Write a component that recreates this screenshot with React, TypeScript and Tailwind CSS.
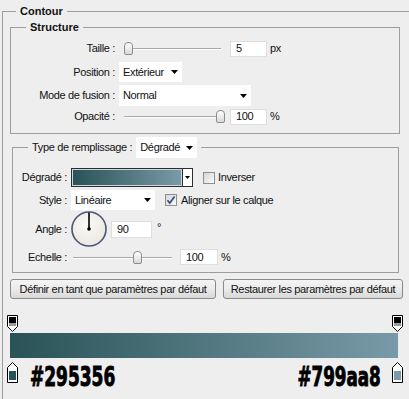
import React from 'react';

const GRAD = 'bg-[linear-gradient(to_right,#295356,#799aa8)]';

function Arrow() {
  return (
    <svg width="7" height="4" viewBox="0 0 7 4" className="shrink-0">
      <path d="M0 0h7L3.5 4z" fill="#000" />
    </svg>);
}

function Dropdown({ value, width, height }: {value: string;width: string;height: string;}) {
  return (
    <div className={`${width} ${height} bg-white flex items-center justify-between pl-[4px] pr-[4px] ml-[4px]`}>
      <span>{value}</span>
      <Arrow />
    </div>);
}

function Slider({ thumb, width, track }: {thumb: number;width: string;track: string;}) {
  return (
    <div className={`relative h-[17px] ${width}`}>
      <div className={`absolute top-[8px] h-[2px] border-t border-[#a9a9a9] bg-white ${track}`} />
      <div
        className="absolute top-[2px] w-[9px] h-[13px] rounded-t-[4px] rounded-b-[2px] border border-[#8c8c8c] bg-gradient-to-b from-white to-[#d9d9d9]"
        style={{ left: thumb }} />
    </div>);
}

function Field({ value, width, className = '' }: {value: string;width: string;className?: string;}) {
  return (
    <div className={`${width} h-[16px] bg-white border border-[#dedede] flex items-center pl-[5px] ${className}`}>
      {value}
    </div>);
}

function Checkbox({ checked }: {checked?: boolean;}) {
  return (
    <div className="w-[12px] h-[12px] border border-[#8e8f8f] bg-gradient-to-br from-[#d6d6d6] to-[#fafafa] flex items-center justify-center shrink-0">
      {checked &&
      <svg width="10" height="10" viewBox="0 0 10 10">
          <path d="M1.5 5.2 L3.8 8 L8.6 1.5" fill="none" stroke="#3c5086" strokeWidth="1.8" />
        </svg>
      }
    </div>);
}

function Dial() {
  return (
    <svg width="36" height="36" viewBox="0 0 36 36" className="ml-[4px] shrink-0">
      <defs>
        <radialGradient id="dialFill" cx="45%" cy="40%" r="60%">
          <stop offset="0%" stopColor="#fbfaf6" />
          <stop offset="100%" stopColor="#ebe8e0" />
        </radialGradient>
      </defs>
      <circle cx="18" cy="18" r="17" fill="url(#dialFill)" stroke="#4d5676" strokeWidth="1.6" />
      <line x1="18" y1="18" x2="18" y2="1.5" stroke="#000" strokeWidth="1.6" />
      <circle cx="18" cy="18" r="1.8" fill="#000" />
    </svg>);
}

function TopStop() {
  return (
    <svg width="11" height="17" viewBox="0 0 11 17">
      <path d="M0.5 0.5h10v11l-5 5l-5-5z" fill="#fff" stroke="#000" />
      <rect x="2" y="2" width="7" height="6" fill="#000" />
      <rect x="2" y="8" width="7" height="3" fill="#9a9a9a" />
    </svg>);
}

function BottomStop({ color }: {color: string;}) {
  return (
    <svg width="11" height="21" viewBox="0 0 11 21">
      <path d="M5.5 0.5l5 5v15h-10v-15z" fill="#fff" stroke="#000" />
      <rect x="2" y="9" width="7" height="9" fill={color} />
    </svg>);
}

function Button({ label, width, className = '' }: {label: string;width: string;className?: string;}) {
  return (
    <div className={`${width} h-[20px] rounded-[3px] border border-[#8a8a8a] bg-gradient-to-b from-[#f4f4f4] via-[#ebebeb] to-[#d8d8d8] flex items-center justify-center ${className}`}>
      {label}
    </div>);
}

export default function App() {
  return (
    <div className="w-[409px] h-[399px] overflow-hidden bg-[#eeeeee] text-[11px] tracking-[-0.35px] text-[#111] font-['Liberation_Sans',Arial,sans-serif] pl-[2px]">
      <fieldset className="mt-[4px] w-[420px] h-[420px] border border-[#9d9d9d]">
        <legend className="ml-[13px] px-[4px] leading-[14px] font-bold tracking-normal">Contour</legend>

        {/* Structure */}
        <fieldset className="mt-[2px] ml-[7px] w-[390px] border border-[#9d9d9d] pt-[6px] pb-[8px]">
          <legend className="ml-[15px] px-[4px] leading-[14px] font-bold tracking-normal">Structure</legend>

          <div className="flex items-center h-[17px]">
            <span className="w-[104px] text-right">Taille :</span>
            <div className="ml-[6px]">
              <Slider thumb={3} width="w-[105px]" track="left-[3px] right-[5px]" />
            </div>
            <Field value="5" width="w-[37px]" className="ml-[4px]" />
            <span className="ml-[3px]">px</span>
          </div>

          <div className="flex items-center h-[20px] mt-[5px]">
            <span className="w-[104px] text-right">Position :</span>
            <Dropdown value="Extérieur" width="w-[63px]" height="h-[20px]" />
          </div>

          <div className="flex items-center h-[21px] mt-[3px]">
            <span className="w-[104px] text-right">Mode de fusion :</span>
            <Dropdown value="Normal" width="w-[132px]" height="h-[21px]" />
          </div>

          <div className="flex items-center h-[17px] mt-[2px]">
            <span className="w-[104px] text-right">Opacité :</span>
            <div className="ml-[6px]">
              <Slider thumb={95} width="w-[105px]" track="left-[3px] right-[5px]" />
            </div>
            <Field value="100" width="w-[37px]" className="ml-[4px]" />
            <span className="ml-[3px]">%</span>
          </div>
        </fieldset>

        {/* Remplissage */}
        <fieldset className="mt-[3px] ml-[9px] w-[387px] border border-[#9d9d9d] pb-[7px]">
          <legend className="ml-[15px] px-[4px]">
            <div className="flex items-center h-[21px]">
              <span>Type de remplissage :</span>
              <Dropdown value="Dégradé" width="w-[61px]" height="h-[21px]" />
            </div>
          </legend>

          <div className="flex items-center h-[19px] mt-[10px]">
            <span className="w-[54px] text-right">Dégradé :</span>
            <div className="ml-[4px] w-[122px] h-[19px] border border-[#2e2e2e] flex">
              <div className={`flex-1 border border-[#cfd6d8] ${GRAD}`} />
              <div className="w-[10px] bg-white border-l border-[#2e2e2e] flex items-center justify-center">
                <svg width="5" height="3" viewBox="0 0 5 3">
                  <path d="M0 0h5L2.5 3z" fill="#000" />
                </svg>
              </div>
            </div>
            <div className="ml-[10px]">
              <Checkbox />
            </div>
            <span className="ml-[3px]">Inverser</span>
          </div>

          <div className="flex items-center h-[20px] mt-[3px]">
            <span className="w-[54px] text-right">Style :</span>
            <Dropdown value="Linéaire" width="w-[84px]" height="h-[20px]" />
            <div className="ml-[10px]">
              <Checkbox checked />
            </div>
            <span className="ml-[4px]">Aligner sur le calque</span>
          </div>

          <div className="flex items-center h-[36px] mt-[1px]">
            <span className="w-[54px] text-right">Angle :</span>
            <Dial />
            <Field value="90" width="w-[41px]" className="ml-[4px] h-[17px]" />
            <span className="ml-[5px] self-start mt-[8px]">°</span>
          </div>

          <div className="flex items-center h-[16px] mt-[2px]">
            <span className="w-[54px] text-right">Echelle :</span>
            <div className="ml-[4px]">
              <Slider thumb={62} width="w-[104px]" track="left-[2px] right-[3px]" />
            </div>
            <Field value="100" width="w-[38px]" className="ml-[5px]" />
            <span className="ml-[3px]">%</span>
          </div>
        </fieldset>

        <div className="flex mt-[6px] ml-[7px]">
          <Button label="Définir en tant que paramètres par défaut" width="w-[206px]" />
          <Button label="Restaurer les paramètres par défaut" width="w-[180px]" className="ml-[7px]" />
        </div>

        {/* Gradient preview */}
        <div className="flex justify-between mt-[16px] ml-[4px] w-[396px] h-[17px]">
          <TopStop />
          <TopStop />
        </div>
        <div className={`mt-[1px] ml-[7px] w-[388px] h-[25px] ${GRAD}`} />
        <div className="flex items-start mt-[4px] ml-[4px] w-[396px]">
          <BottomStop color="#295356" />
          <div className="flex-1 flex justify-between ml-[12px] mr-[11px] mt-[1px] text-[27px] leading-[28px] font-bold tracking-normal text-black font-['DejaVu_Sans_Condensed','DejaVu_Sans',sans-serif] [-webkit-text-stroke:0.9px_black]">
            <span className="inline-block origin-left scale-x-[0.7]">#295356</span>
            <span className="inline-block origin-right scale-x-[0.69]">#799aa8</span>
          </div>
          <BottomStop color="#799aa8" />
        </div>
      </fieldset>
    </div>);
}
